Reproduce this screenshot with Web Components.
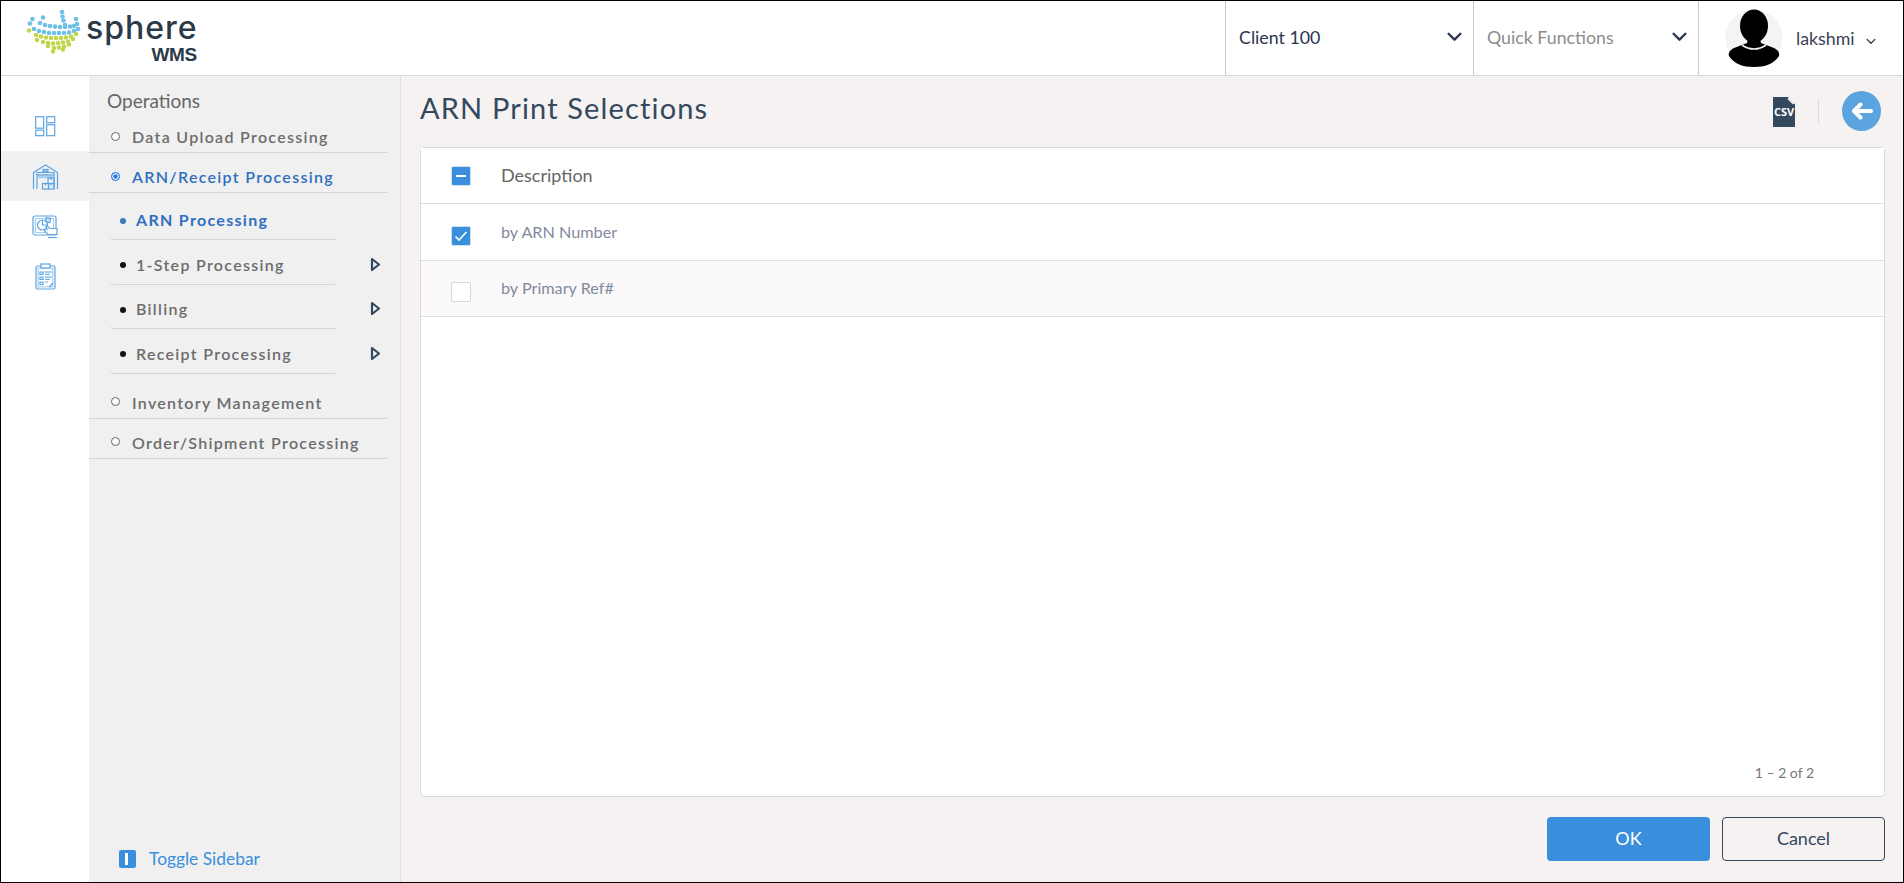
<!DOCTYPE html>
<html lang="en">
<head>
<meta charset="utf-8">
<title>ARN Print Selections</title>
<style>
  html, body { margin: 0; height: 100%; }
  body { font-family: 'Lato', sans-serif; }
</style>
</head>
<body>
<wms-app>
  <wms-header slot="header"></wms-header>
  <wms-rail slot="rail"></wms-rail>
  <wms-menu slot="menu">
    <menu-item>Data Upload Processing</menu-item>
    <menu-item active>ARN/Receipt Processing</menu-item>
    <sub-list>
      <sub-item active>ARN Processing</sub-item>
      <sub-item arrow>1-Step Processing</sub-item>
      <sub-item arrow>Billing</sub-item>
      <sub-item arrow>Receipt Processing</sub-item>
    </sub-list>
    <menu-item>Inventory Management</menu-item>
    <menu-item>Order/Shipment Processing</menu-item>
  </wms-menu>
  <page-head slot="content">ARN Print Selections</page-head>
  <data-card slot="content">
    <data-row head check="some">Description</data-row>
    <data-row check="on">by ARN Number</data-row>
    <data-row check="off" alt>by Primary Ref#</data-row>
  </data-card>
  <page-actions slot="content"></page-actions>
</wms-app>

<script>
// small helper so each element just hands over its css and markup
class Base extends HTMLElement {
  constructor() {
    super();
    this.attachShadow({ mode: 'open' });
  }
  paint(css, html) {
    this.shadowRoot.innerHTML = '<style>' + css + '</style>' + html;
  }
}

const chevron = (w, h, sw) => `<svg width="${w}" height="${h}" viewBox="0 0 14 9" fill="none" stroke="#2c3550" stroke-width="${sw}" stroke-linecap="round" stroke-linejoin="round"><path d="M1.5 1.5 7 7l5.5-5.5"/></svg>`;

class WmsApp extends Base {
  connectedCallback() {
    this.paint(`
      :host { display: flex; flex-direction: column; height: 883px; box-sizing: border-box; border: 1px solid #000; background: #fff; overflow: hidden; }
      .main { flex: 1; display: flex; min-height: 0; }
      .content { flex: 1; min-width: 0; display: flex; flex-direction: column; background: #f6f2f2; padding: 0 18px 0 19px; }
    `, `
      <slot name="header"></slot>
      <div class="main">
        <slot name="rail"></slot>
        <slot name="menu"></slot>
        <div class="content"><slot name="content"></slot></div>
      </div>
    `);
  }
}

class WmsHeader extends Base {
  connectedCallback() {
    const dots = [
      [61,11],[61.5,15.5],[62.5,19.5],[64,24],
      [42,16.5],[39,22],[44,24],[49,25],[54,25.6],[59,26],[64,26],[69,25.6],[73,25],
      [75,18],[76,23],[31.5,18],[29,22.5],[33,28],[38,30],[43,31],[48,32],[53,32],[58,32],[63,32],[68,31.5],[73,30],[77,28]
    ];
    const greens = [
      [28,29.5],[35,34],[40,35.5],[45,36.5],[50,37],[55,37],[60,37],[65,36.5],[70,35.5],[75,33],
      [36,39],[42,41],[47,42],[52,42.5],[57,42],[62,41.5],[67,40.5],[72,38],
      [47,45],[53,47],[58,46.5],[63,45.5],[68,43.5],
      [52,50.5],[62,48.5]
    ];
    const circles = dots.map(d => `<circle cx="${d[0]}" cy="${d[1]}" r="2.3" fill="#6fc0e6"/>`).join('')
      + greens.map(d => `<circle cx="${d[0]}" cy="${d[1]}" r="2.3" fill="#c3d64f"/>`).join('');
    this.paint(`
      :host { display: flex; height: 75px; box-sizing: border-box; border-bottom: 1px solid #d6d6dc; background: #fff; flex-shrink: 0; }
      .logo { flex: 1; display: flex; align-items: flex-start; }
      .logo svg { display: block; flex-shrink: 0; margin-left: 25px; }
      .word { margin-left: 4px; width: 111px; display: flex; flex-direction: column; align-items: flex-end; color: #2c3a48; }
      .sphere { font: 500 32px/30px 'Inter', sans-serif; letter-spacing: 1px; margin-top: 12px; height: 30px; align-self: flex-start; }
      .wms { font: 700 19px/19px 'Liberation Sans', sans-serif; letter-spacing: -.3px; margin-top: 2px; }
      .sel { width: 248px; box-sizing: border-box; border-left: 1px solid #c8c8c8; display: flex; align-items: center; justify-content: space-between; padding: 0 11px 2px 13px; font-size: 17.8px; color: #2c3550; }
      .sel.q { width: 225px; color: #8d8d8d; padding-right: 11px; }
      .user { width: 205px; box-sizing: border-box; border-left: 1px solid #c8c8c8; display: flex; align-items: center; padding-left: 26px; font-size: 17.8px; color: #3a3f55; }
      .user svg:first-child { flex-shrink: 0; margin-right: 13px; }
      .user .caret { margin-left: 11px; }
    `, `
      <div class="logo">
        <svg width="56" height="56" viewBox="25 0 56 56">${circles}</svg>
        <div class="word"><span class="sphere">sphere</span><span class="wms">WMS</span></div>
      </div>
      <div class="sel"><span>Client 100</span>${chevron(15, 10, 2.2)}</div>
      <div class="sel q"><span>Quick Functions</span>${chevron(15, 10, 2.2)}</div>
      <div class="user">
        <svg width="58" height="58" viewBox="0 0 58 58">
          <circle cx="29" cy="29" r="28.5" fill="#f4f4f4"/>
          <ellipse cx="29" cy="17" rx="14" ry="16.5" fill="#000"/>
          <path d="M23 30h12l1 4 13 5c4 2 6 5 5 8-5 8-14 11-25 11S9 55 4 47c-1-3 1-6 5-8l13-5z" fill="#000"/>
          <path d="M17 36c4 3 8 4 12 4s8-1 12-4" fill="none" stroke="#f4f4f4" stroke-width="1.6"/>
        </svg>
        <span>lakshmi</span>
        <span class="caret">${chevron(10, 7, 1.8)}</span>
      </div>
    `);
  }
}

class WmsRail extends Base {
  connectedCallback() {
    const c = '#5ba3e3';
    const icons = [
      `<svg width="22" height="22" viewBox="0 0 22 22" fill="none" stroke="${c}" stroke-width="1.2"><rect x="1.7" y="1.7" width="8" height="11.5"/><rect x="12.7" y="1.7" width="8" height="6"/><rect x="1.7" y="15.2" width="8" height="5.5"/><rect x="12.7" y="9.7" width="8" height="11"/></svg>`,
      `<svg width="27" height="27" viewBox="0 0 27 27" fill="none" stroke="${c}" stroke-width="1.2"><path d="M1.5 26V9.5L13.5 2l12 7.5V26"/><path d="M5 26V9.5h17V26"/><rect x="11" y="6.5" width="5" height="2.4" fill="#a9cdf0"/><path d="M5 12h17" stroke-width="1.4"/><path d="M5 14h17" stroke="#a9cdf0" stroke-width="2.4"/><rect x="16" y="15" width="6" height="5.5"/><rect x="10.5" y="20.5" width="6" height="5.5"/><rect x="16.5" y="20.5" width="5.5" height="5.5"/><path d="M19 15v2M13.5 20.5v2M19.2 20.5v2"/></svg>`,
      `<svg style="margin-top:2px" width="26" height="24" viewBox="0 0 26 24" fill="none" stroke="${c}" stroke-width="1.2"><rect x="1" y="1" width="23" height="19" rx="2"/><path d="M3.5 3.5h18v14h-18z" stroke="#a9cdf0"/><circle cx="10.5" cy="10" r="5"/><path d="M10.5 5v5h5"/><path d="M14 2.8l4.5.5-.7 4.5-4-1.3z" fill="#d6e7f8"/><path d="M12 15l4 4.5h9v-6h-7l-2-2h-2l1.5 3.5" fill="#fff"/><path d="M16 22.5h9"/></svg>`,
      `<svg width="21" height="27" viewBox="0 0 21 27" fill="none" stroke="${c}" stroke-width="1.2"><rect x="1" y="3" width="19" height="23" rx="1.5"/><rect x="3.2" y="5.2" width="14.6" height="18.6" stroke="#a9cdf0"/><rect x="6" y="1" width="9" height="4" fill="#fff"/><path d="M5 9h3v2.5H5zM5 14h3v2.5H5zM5 19h3v2.5H5z"/><path d="M10 9h7M10 11.3h5M10 14h7M10 16.3h5M10 19h3" stroke-width="1.1"/><path d="M14 24l4-4" /></svg>`
    ];
    this.paint(`
      :host { display: block; width: 88px; flex-shrink: 0; background: #fff; padding-top: 25px; box-sizing: border-box; }
      .it { height: 50px; display: flex; align-items: center; justify-content: center; }
      .it.on { background: #f1f1f1; }
    `, icons.map((s, i) => `<div class="it${i === 1 ? ' on' : ''}">${s}</div>`).join(''));
  }
}

class WmsMenu extends Base {
  connectedCallback() {
    this.paint(`
      :host { display: flex; flex-direction: column; width: 312px; flex-shrink: 0; box-sizing: border-box; background: #f0f0f0; border-right: 1px solid #e0e0e0; }
      .title { font-size: 19px; line-height: 22px; color: #666; padding: 14px 0 0 18px; height: 37px; box-sizing: border-box; }
      .list { flex: 1; padding-right: 13px; }
      .toggle { display: flex; align-items: center; padding: 0 0 13px 30px; font-size: 17.4px; color: #3a8fdc; }
      .toggle i { width: 17px; height: 18px; border-radius: 2px; background: #3a8fdc; margin-right: 13px; display: flex; align-items: center; justify-content: center; }
      .toggle i::after { content: ''; width: 3px; height: 12px; background: #fff; margin-right: 2px; }
    `, `
      <div class="title">Operations</div>
      <div class="list"><slot></slot></div>
      <div class="toggle"><i></i><span>Toggle Sidebar</span></div>
    `);
  }
}

class MenuItem extends Base {
  connectedCallback() {
    const on = this.hasAttribute('active');
    this.paint(`
      :host { display: flex; align-items: center; height: 40px; box-sizing: border-box; padding: 8px 0 0 22px; border-bottom: 1px solid #d4d4d4; font-size: 16px; font-weight: 600; letter-spacing: 1.3px; color: ${on ? '#2f6fc0' : '#6c6c6c'}; }
      i { width: 9px; height: 9px; border-radius: 50%; box-sizing: border-box; flex-shrink: 0; margin: -1px 12px 0 0; background: #fff; border: 1.5px solid #666; }
      i.on { border-color: #2a78e4; background: #2a78e4; box-shadow: inset 0 0 0 1.2px #fff; }
    `, `<i class="${on ? 'on' : ''}"></i><slot></slot>`);
  }
}

class SubList extends Base {
  connectedCallback() {
    this.paint(`:host { display: block; padding: 3px 0 4.3px 21px; }`, `<slot></slot>`);
  }
}

class SubItem extends Base {
  connectedCallback() {
    const on = this.hasAttribute('active');
    const arrow = this.hasAttribute('arrow')
      ? `<svg class="arr" width="11" height="15" viewBox="0 0 11 15" fill="none" stroke="#34495e" stroke-width="2.2" stroke-linejoin="round"><path d="M2 2l7 5.5L2 13z"/></svg>` : '';
    this.paint(`
      :host { display: block; height: 44.67px; position: relative; font-size: 16px; font-weight: ${on ? 700 : 600}; letter-spacing: 1.3px; color: ${on ? '#2f6fc0' : '#6c6c6c'}; }
      .box { width: 227px; height: 44px; box-sizing: border-box; display: flex; align-items: center; padding: 4px 0 0 10px; border-bottom: 1px solid #d4d4d4; border-radius: 0 0 4px 4px; }
      i { width: 6px; height: 6px; border-radius: 50%; background: ${on ? '#3a78c0' : '#111'}; margin: 2px 10px 0 0; flex-shrink: 0; }
      .arr { position: absolute; left: 260px; top: 16px; }
    `, `<div class="box"><i></i><slot></slot></div>${arrow}`);
  }
}

class PageHead extends Base {
  connectedCallback() {
    this.paint(`
      :host { display: flex; align-items: center; height: 71px; flex-shrink: 0; padding: 0 4px 1px 0; color: #34495e; font-size: 29px; letter-spacing: 1.15px; box-sizing: border-box; }
      .t { flex: 1; margin-bottom: 7px; }
      .csv { width: 22px; height: 30px; flex-shrink: 0; display: block; margin-top: 1px; }
      .sep { width: 1px; height: 24px; background: #d8d8d8; margin: 0 23px; }
      .back { width: 39px; height: 40px; border-radius: 50%; background: #5ca4df; display: flex; align-items: center; justify-content: center; }
    `, `
      <span class="t"><slot></slot></span>
      <svg class="csv" viewBox="0 0 22 30">
        <path d="M0 0h15l7 7v23H0z" fill="#34495e"/>
        <path d="M16 0l6 6" stroke="#f6f2f2" stroke-width="2"/>
        <path d="M15 1.5l5.5 5.5" stroke="#fff" stroke-width="1.4"/>
        <text x="11" y="19" text-anchor="middle" font-family="Open Sans, sans-serif" font-weight="700" font-size="11" letter-spacing="0" fill="#fff">CSV</text>
      </svg>
      <span class="sep"></span>
      <span class="back"><svg width="22" height="18" viewBox="0 0 22 18" fill="none" stroke="#fff" stroke-width="4" stroke-linecap="round" stroke-linejoin="round"><path d="M9.5 2.5 3 9l6.5 6.5M4 9h16"/></svg></span>
    `);
  }
}

class DataCard extends Base {
  connectedCallback() {
    this.paint(`
      :host { display: flex; flex-direction: column; height: 650px; flex-shrink: 0; box-sizing: border-box; background: #fff; border: 1px solid #d9d9e0; border-radius: 4px; position: relative; }
      .rows { flex: 1; }
      .foot { height: 32px; padding: 0 70px 0 0; text-align: right; font-size: 14px; color: #777; line-height: 18px; }
    `, `<div class="rows"><slot></slot></div><div class="foot">1 – 2 of 2</div>`);
  }
}

class DataRow extends Base {
  connectedCallback() {
    const head = this.hasAttribute('head');
    const alt = this.hasAttribute('alt');
    const state = this.getAttribute('check');
    let mark = '';
    if (state === 'on') mark = `<svg width="14" height="12" viewBox="0 0 14 12" fill="none" stroke="#fff" stroke-width="1.6"><path d="M1.5 6.5 5 10l7.5-8"/></svg>`;
    if (state === 'some') mark = `<span class="dash"></span>`;
    this.paint(`
      :host { display: flex; align-items: center; height: ${head || alt ? 56 : 57}px; box-sizing: border-box; border-bottom: 1px solid #dedee4; padding-left: 30px; background: ${alt ? '#fbf9f9' : '#fff'}; font-size: ${head ? 18 : 16.2}px; color: ${head ? '#666' : '#7f8b9c'}; }
      .cb { width: 20px; height: 20px; box-sizing: border-box; border-radius: 2px; flex-shrink: 0; margin: ${head ? 0 : 7}px 30px 0 0; display: flex; align-items: center; justify-content: center; }
      .cb.on, .cb.some { background: #3a8fdc; border: 1px solid #cfe0f2; }
      .cb.off { background: #fff; border: 1px solid #d6d6d6; }
      .dash { width: 10px; height: 2px; background: #fff; }
      .txt { margin-top: ${head ? -1 : -2}px; }
    `, `<span class="cb ${state}">${mark}</span><span class="txt"><slot></slot></span>`);
  }
}

class PageActions extends Base {
  connectedCallback() {
    this.paint(`
      :host { display: flex; justify-content: flex-end; gap: 12px; padding: 20px 0 0; }
      button { width: 163px; height: 44px; border-radius: 4px; font: 400 18px 'Lato', sans-serif; cursor: pointer; box-sizing: border-box; padding: 0 0 2px; }
      .ok { background: #3a8fdc; color: #fff; border: 0; }
      .no { background: transparent; color: #34495e; border: 1px solid #34495e; }
    `, `<button class="ok">OK</button><button class="no">Cancel</button>`);
  }
}

customElements.define('wms-app', WmsApp);
customElements.define('wms-header', WmsHeader);
customElements.define('wms-rail', WmsRail);
customElements.define('wms-menu', WmsMenu);
customElements.define('menu-item', MenuItem);
customElements.define('sub-list', SubList);
customElements.define('sub-item', SubItem);
customElements.define('page-head', PageHead);
customElements.define('data-card', DataCard);
customElements.define('data-row', DataRow);
customElements.define('page-actions', PageActions);
</script>
</body>
</html>
